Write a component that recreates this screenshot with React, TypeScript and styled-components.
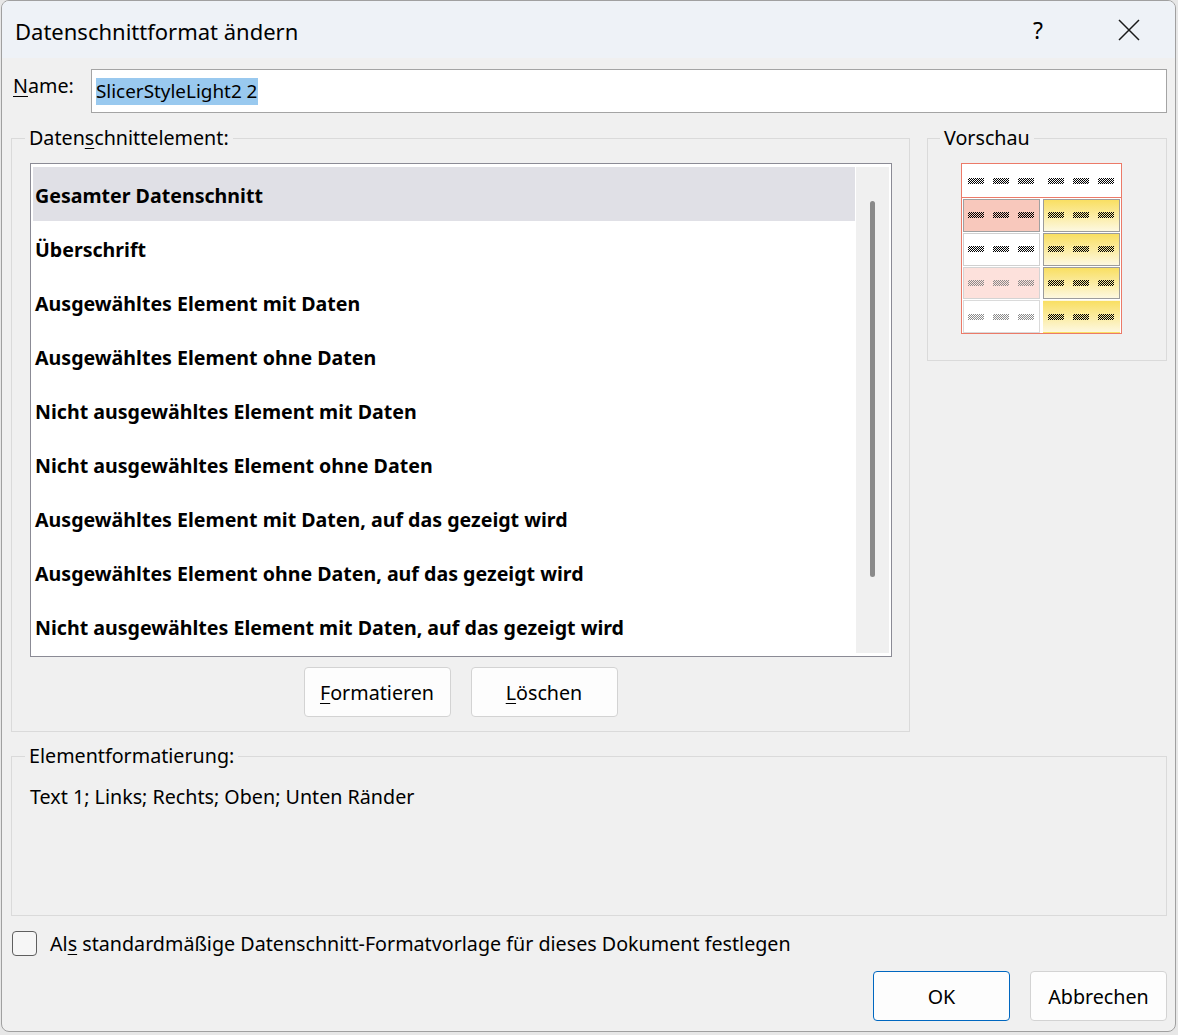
import React from 'react';
import styled, { createGlobalStyle } from 'styled-components';

const Global = createGlobalStyle`
  html, body { margin: 0; padding: 0; background: #e7e7e7; }
  body { font-family: "Noto Sans", "Open Sans", sans-serif; }
  * { box-sizing: border-box; }
`;

const Window = styled.div`
  margin: 0 0 0 1px;
  width: 1175px;
  height: 1032px;
  border: 1px solid #a0a0a0;
  border-radius: 8px;
  background: #f0f0f0;
  overflow: hidden;
  display: flex;
  flex-direction: column;
  font-size: 19.7px;
  color: #000;
`;

const TitleBar = styled.div`
  height: 57px;
  flex: none;
  background: #eef2f7;
  display: flex;
  align-items: center;
  padding-left: 13px;
`;

const Title = styled.div`
  font-size: 22px;
  flex: 1;
  padding-top: 2px;
`;

const TitleButton = styled.div<{ $w: number }>`
  width: ${(p) => p.$w}px;
  height: 57px;
  display: flex;
  align-items: center;
  justify-content: center;
  font-size: 23px;
`;

const Body = styled.div`
  flex: 1;
  display: flex;
  flex-direction: column;
  padding: 0 8px 0 9px;
`;

const NameRow = styled.div`
  margin-top: 11px;
  height: 44px;
  display: flex;
  align-items: center;
`;

const NameLabel = styled.div`
  width: 80px;
  padding-left: 2px;
  align-self: flex-start;
  padding-top: 3px;
`;

const NameInput = styled.div`
  flex: 1;
  height: 44px;
  background: #fff;
  border: 1px solid #a4a4a4;
  display: flex;
  align-items: center;
  padding-left: 4px;
  font-size: 18.9px;
`;

const Selected = styled.span`
  background: #99c9ef;
  line-height: 27px;
  padding-right: 1px;
`;

const U = styled.u`
  text-decoration-thickness: 1px;
  text-underline-offset: 3px;
`;

const TopSection = styled.div`
  margin-top: 13px;
  display: flex;
  align-items: flex-start;
  gap: 17px;
`;

const Group = styled.fieldset<{ $w?: number; $pt: number; $pb: number }>`
  margin: 0;
  min-width: 0;
  ${(p) => (p.$w ? `width: ${p.$w}px;` : '')}
  border: 1px solid #dadada;
  padding: ${(p) => `${p.$pt}px 0 ${p.$pb}px 0`};
`;

const GroupBody = styled.div<{ $pl: number }>`
  padding-left: ${(p) => p.$pl}px;
  display: flex;
  flex-direction: column;
`;

const Legend = styled.legend<{ $ml: number }>`
  margin-left: ${(p) => p.$ml}px;
  padding: 0 4px;
  line-height: 24px;
  font-size: 19.7px;
`;

const ListBox = styled.div`
  width: 862px;
  height: 494px;
  border: 1px solid #8b8b95;
  background: #fff;
  padding: 3px 2px 3px 2px;
  display: flex;
`;

const Items = styled.div`
  flex: 1;
  display: flex;
  flex-direction: column;
`;

const Item = styled.div<{ $sel?: boolean }>`
  height: 54px;
  flex: none;
  display: flex;
  align-items: center;
  padding: 3px 0 0 2px;
  font-weight: 700;
  font-size: 19.6px;
  background: ${(p) => (p.$sel ? '#e0e0e6' : 'transparent')};
`;

const ScrollTrack = styled.div`
  width: 33px;
  margin-left: 1px;
  background: #f0f0f0;
  display: flex;
  justify-content: center;
  padding-top: 34px;
`;

const Thumb = styled.div`
  width: 5px;
  height: 376px;
  border-radius: 3px;
  background: #8a8a8a;
`;

const ButtonRow = styled.div<{ $justify: string; $gap: number; $mt: number }>`
  display: flex;
  justify-content: ${(p) => p.$justify};
  gap: ${(p) => p.$gap}px;
  margin-top: ${(p) => p.$mt}px;
`;

const Button = styled.div<{ $w: number; $primary?: boolean }>`
  width: ${(p) => p.$w}px;
  height: 50px;
  background: #fdfdfd;
  border: 1px solid ${(p) => (p.$primary ? '#0067c0' : '#d3d3d3')};
  border-radius: 4px;
  display: flex;
  align-items: center;
  justify-content: center;
  font-size: 19.7px;
`;

const Preview = styled.div`
  width: 161px;
  height: 171px;
  border: 1px solid #ec7a68;
  background: #fff;
  display: flex;
  flex-direction: column;
`;

const PreviewHeader = styled.div`
  height: 34px;
  border-bottom: 1px solid #ec7a68;
  display: flex;
  align-items: center;
  padding: 0 5px 0 6px;
  gap: 9px;
`;

const PreviewGrid = styled.div`
  flex: 1;
  display: grid;
  grid-template-columns: 77px 77px;
  grid-template-rows: repeat(4, 1fr);
  column-gap: 3px;
  row-gap: 1px;
  padding: 1px 0 0 1px;
`;

const Cell = styled.div<{ $bg: string; $border: string }>`
  background: ${(p) => p.$bg};
  border: 1px solid ${(p) => p.$border};
  display: flex;
  align-items: center;
  justify-content: space-between;
  padding: 0 5px 0 4px;
`;

const Dash = styled.span<{ $c: string; $ml?: number }>`
  width: 16px;
  height: 6px;
  margin-left: ${(p) => p.$ml ?? 0}px;
  background: repeating-conic-gradient(${(p) => p.$c} 0 25%, transparent 0 50%) 0 0 / 2px 2px;
`;

const FormatText = styled.div`
  line-height: 24px;
`;

const Spacer = styled.div<{ $h: number }>`
  height: ${(p) => p.$h}px;
  flex: none;
`;

const CheckRow = styled.div`
  margin-top: 14px;
  display: flex;
  align-items: center;
  gap: 13px;
  padding-left: 1px;
`;

const CheckBox = styled.div`
  width: 25px;
  height: 25px;
  border: 1px solid #5f5f5f;
  border-radius: 4px;
  background: #f6f6f6;
`;

const DARK = '#000';
const LIGHT = '#8a8a8a';
const YELLOW = 'linear-gradient(#f9df62, #fdf8e0)';

const cells = [
  { bg: '#f8c8bc', border: '#a0a0a0', c: DARK },
  { bg: YELLOW, border: '#9c9c9c', c: DARK },
  { bg: '#fff', border: '#d0d0d0', c: DARK },
  { bg: YELLOW, border: '#9c9c9c', c: DARK },
  { bg: '#fde1dc', border: '#d4d4d4', c: LIGHT },
  { bg: YELLOW, border: '#9c9c9c', c: DARK },
  { bg: '#fff', border: '#dadada', c: LIGHT },
  { bg: YELLOW, border: 'transparent', c: DARK },
];

const items = [
  'Gesamter Datenschnitt',
  'Überschrift',
  'Ausgewähltes Element mit Daten',
  'Ausgewähltes Element ohne Daten',
  'Nicht ausgewähltes Element mit Daten',
  'Nicht ausgewähltes Element ohne Daten',
  'Ausgewähltes Element mit Daten, auf das gezeigt wird',
  'Ausgewähltes Element ohne Daten, auf das gezeigt wird',
  'Nicht ausgewähltes Element mit Daten, auf das gezeigt wird',
];

export default function App() {
  return (
    <>
      <Global />
      <Window>
        <TitleBar>
          <Title>Datenschnittformat ändern</Title>
          <TitleButton $w={90}>?</TitleButton>
          <TitleButton $w={92}>
            <svg width="22" height="22" viewBox="0 0 22 22">
              <path d="M1 1 L21 21 M21 1 L1 21" stroke="#1a1a1a" strokeWidth="1.5" fill="none" />
            </svg>
          </TitleButton>
        </TitleBar>
        <Body>
          <NameRow>
            <NameLabel>
              <U>N</U>ame:
            </NameLabel>
            <NameInput>
              <Selected>SlicerStyleLight2 2</Selected>
            </NameInput>
          </NameRow>
          <TopSection>
            <Group $w={899} $pt={13} $pb={14}>
              <Legend $ml={13}>
                Daten<U>s</U>chnittelement:
              </Legend>
              <GroupBody $pl={18}>
                <ListBox>
                  <Items>
                    {items.map((t, i) => (
                      <Item key={t} $sel={i === 0}>
                        {t}
                      </Item>
                    ))}
                  </Items>
                  <ScrollTrack>
                    <Thumb />
                  </ScrollTrack>
                </ListBox>
              </GroupBody>
              <ButtonRow $justify="center" $gap={20} $mt={10}>
                <Button $w={147}>
                  <span>
                    <U>F</U>ormatieren
                  </span>
                </Button>
                <Button $w={147}>
                  <span>
                    <U>L</U>öschen
                  </span>
                </Button>
              </ButtonRow>
            </Group>
            <Group $w={240} $pt={13} $pb={26}>
              <Legend $ml={12}>Vorschau</Legend>
              <GroupBody $pl={33}>
                <Preview>
                  <PreviewHeader>
                    {[0, 1, 2, 3, 4, 5].map((i) => (
                      <Dash key={i} $c={DARK} $ml={i === 3 ? 5 : 0} />
                    ))}
                  </PreviewHeader>
                  <PreviewGrid>
                    {cells.map((c, i) => (
                      <Cell key={i} $bg={c.bg} $border={c.border}>
                        <Dash $c={c.c} />
                        <Dash $c={c.c} />
                        <Dash $c={c.c} />
                      </Cell>
                    ))}
                  </PreviewGrid>
                </Preview>
              </GroupBody>
            </Group>
          </TopSection>
          <Spacer $h={12} />
          <Group $pt={17} $pb={106}>
            <Legend $ml={13}>Elementformatierung:</Legend>
            <GroupBody $pl={18}>
              <FormatText>Text 1; Links; Rechts; Oben; Unten Ränder</FormatText>
            </GroupBody>
          </Group>
          <CheckRow>
            <CheckBox />
            <span>
              Al<U>s</U> standardmäßige Datenschnitt-Formatvorlage für dieses Dokument festlegen
            </span>
          </CheckRow>
          <ButtonRow $justify="flex-end" $gap={20} $mt={14}>
            <Button $w={137} $primary>
              OK
            </Button>
            <Button $w={137}>Abbrechen</Button>
          </ButtonRow>
        </Body>
      </Window>
    </>
  );
}
